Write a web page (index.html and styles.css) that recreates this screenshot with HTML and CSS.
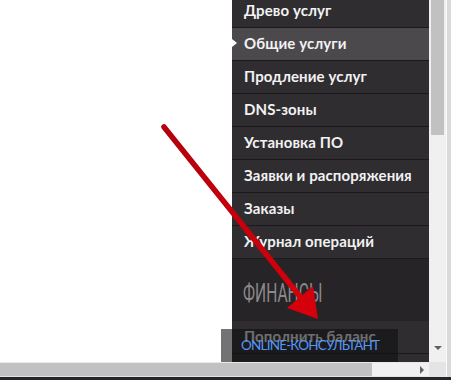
FILE: index.html
```html
<!DOCTYPE html>
<html lang="ru">
<head>
<meta charset="utf-8">
<link rel="stylesheet" href="styles.css">
</head>
<body>
<div class="screen">
  <div class="main">
    <div class="page">
      <div class="blank"></div>
      <nav class="sidebar">
        <ul class="menu">
          <li class="item">Древо услуг</li>
          <li class="item active">Общие услуги</li>
          <li class="item">Продление услуг</li>
          <li class="item">DNS-зоны</li>
          <li class="item">Установка ПО</li>
          <li class="item">Заявки и распоряжения</li>
          <li class="item">Заказы</li>
          <li class="item">Журнал операций</li>
        </ul>
        <div class="section"><span class="section-title">ФИНАНСЫ</span></div>
        <ul class="menu">
          <li class="item">Пополнить баланс</li>
          <li class="item"></li>
        </ul>
      </nav>
    </div>
    <div class="vscroll">
      <div class="vthumb"></div>
      <div class="vtrack"></div>
      <div class="arrow-down"></div>
    </div>
    <div class="edge"></div>
  </div>
  <div class="hbar">
    <div class="hscroll">
      <div class="hthumb"></div>
      <div class="htrack"><div class="arrow-right"></div></div>
    </div>
    <div class="corner"></div>
    <div class="edge"></div>
  </div>
  <div class="taskbar"></div>

  <div class="consultant">ONLINE-КОНСУЛЬТАНТ</div>

  <svg class="pointer" width="451" height="380" viewBox="0 0 451 380">
    <defs>
      <linearGradient id="g" x1="164" y1="127" x2="317" y2="318" gradientUnits="userSpaceOnUse">
        <stop offset="0" stop-color="#b3000a"/>
        <stop offset="1" stop-color="#d8000d"/>
      </linearGradient>
    </defs>
    <path d="M164 127 L302 299" stroke="url(#g)" stroke-width="5.5" stroke-linecap="round" fill="none"/>
    <polygon points="287,308 313,286 318,319" fill="#d6000c"/>
  </svg>
</div>
</body>
</html>
```

FILE: styles.css
```css
* { box-sizing: border-box; }
html, body { margin: 0; padding: 0; }
body {
  width: 451px;
  height: 380px;
  overflow: hidden;
  background: #ffffff;
  font-family: "Lato", "Noto Sans", sans-serif;
}
.screen {
  position: relative;
  width: 451px;
  height: 380px;
  display: flex;
  flex-direction: column;
}
.main {
  display: flex;
  height: 362px;
  overflow: hidden;
}
.page {
  width: 429px;
  display: flex;
  overflow: hidden;
  background: #fff;
}
.blank { width: 232px; flex: none; }
.sidebar {
  width: 197px;
  flex: none;
  background: #2f2d30;
  margin-top: -5px;
}
.menu { list-style: none; margin: 0; padding: 0; }
.item {
  position: relative;
  height: 33px;
  padding: 0 0 3px 12px;
  border-bottom: 1px solid #1b191c;
  display: flex;
  align-items: center;
  color: #f2f2f2;
  font-size: 15px;
  font-weight: 700;
  letter-spacing: 0.1px;
  background: #2f2d30;
  white-space: nowrap;
}
.item.active { background: #4b494c; }
.item.active::before {
  content: "";
  position: absolute;
  left: 0;
  top: 11px;
  border-left: 5px solid #ffffff;
  border-top: 4.5px solid transparent;
  border-bottom: 4.5px solid transparent;
}
.section {
  height: 62px;
  background: #262427;
  padding: 21px 0 0 11px;
}
.section-title {
  display: inline-block;
  font-family: "Roboto", sans-serif;
  font-size: 26px;
  line-height: 26px;
  color: #8a898b;
  transform: scaleX(0.6);
  transform-origin: left center;
}
.vscroll {
  width: 17px;
  flex: none;
  background: #f0f0f0;
  display: flex;
  flex-direction: column;
  position: relative;
}
.vthumb {
  width: 13px;
  margin-left: 2px;
  height: 135px;
  background: #c1c1c1;
}
.vtrack { flex: 1; }
.arrow-down {
  position: absolute;
  left: 5px;
  bottom: 12px;
  border-top: 4px solid #606060;
  border-left: 4px solid transparent;
  border-right: 4px solid transparent;
}
.edge {
  width: 5px;
  flex: none;
  border-left: 1px solid #fbfbfb;
  background: #d9d9d9;
}
.hbar {
  height: 15px;
  display: flex;
}
.hscroll {
  width: 429px;
  display: flex;
  background: #f0f0f0;
  border-top: 1px solid #e9e9e9;
  border-bottom: 1px solid #e2e2e2;
}
.hthumb {
  width: 372px;
  background: #c1c1c1;
}
.htrack {
  flex: 1;
  position: relative;
}
.arrow-right {
  position: absolute;
  right: 5px;
  top: 3px;
  border-left: 4px solid #606060;
  border-top: 4px solid transparent;
  border-bottom: 4px solid transparent;
}
.corner {
  width: 17px;
  background: #e4e4e4;
}
.taskbar {
  height: 3px;
  background: #23262c;
}
.consultant {
  position: absolute;
  left: 221px;
  top: 329px;
  width: 177px;
  height: 33px;
  padding: 8px 0 0 20px;
  background: rgba(14, 14, 16, 0.58);
  color: #5597f4;
  font-family: "Lato", sans-serif;
  font-size: 13.5px;
  letter-spacing: -0.8px;
  line-height: 16px;
  white-space: nowrap;
}
.pointer {
  position: absolute;
  left: 0;
  top: 0;
  pointer-events: none;
}
```
